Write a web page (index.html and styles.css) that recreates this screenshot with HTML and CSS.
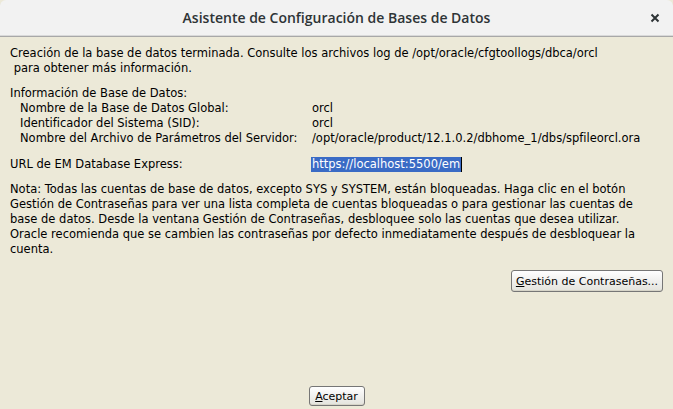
FILE: index.html
```html
<!DOCTYPE html>
<html lang="es">
<head>
<meta charset="utf-8">
<title>Asistente de Configuración de Bases de Datos</title>
<link rel="stylesheet" href="styles.css">
</head>
<body>
<div class="window">
  <header class="titlebar">
    <span class="title">Asistente de Configuración de Bases de Datos</span>
    <span class="close">
      <svg width="10" height="10" viewBox="0 0 10 10"><path d="M1.5 1.5 L8.5 8.5 M8.5 1.5 L1.5 8.5" stroke="#2e3436" stroke-width="2" stroke-linecap="butt"/></svg>
    </span>
  </header>
  <main class="content">
    <p class="line">Creación de la base de datos terminada. Consulte los archivos log de /opt/oracle/cfgtoollogs/dbca/orcl</p>
    <p class="line"> para obtener más información.</p>
    <div class="info">
      <p class="line">Información de Base de Datos:</p>
      <div class="grid">
        <span class="k">Nombre de la Base de Datos Global:</span><span class="v">orcl</span>
        <span class="k">Identificador del Sistema (SID):</span><span class="v">orcl</span>
        <span class="k">Nombre del Archivo de Parámetros del Servidor:</span><span class="v">/opt/oracle/product/12.1.0.2/dbhome_1/dbs/spfileorcl.ora</span>
      </div>
    </div>
    <div class="url">
      <span class="urlk">URL de EM Database Express:</span>
      <span class="sel">https://localhost:5500/em</span><span class="caret"></span>
    </div>
    <div class="note">
      <p class="line">Nota: Todas las cuentas de base de datos, excepto SYS y SYSTEM, están bloqueadas. Haga clic en el botón</p>
      <p class="line">Gestión de Contraseñas para ver una lista completa de cuentas bloqueadas o para gestionar las cuentas de</p>
      <p class="line">base de datos. Desde la ventana Gestión de Contraseñas, desbloquee solo las cuentas que desea utilizar.</p>
      <p class="line">Oracle recomienda que se cambien las contraseñas por defecto inmediatamente después de desbloquear la</p>
      <p class="line">cuenta.</p>
    </div>
    <div class="btnrow">
      <button class="btn btn-pw"><u>G</u>estión de Contraseñas...</button>
    </div>
  </main>
  <footer class="footer">
    <button class="btn btn-ok"><u>A</u>ceptar</button>
  </footer>
</div>
</body>
</html>
```
FILE: styles.css
```css
* { box-sizing: border-box; }
html, body { margin: 0; padding: 0; }
body {
  width: 673px;
  height: 409px;
  overflow: hidden;
  background: #ece9d8;
  font-family: "DejaVu Sans", sans-serif;
  font-size: 11.5px;
  color: #000;
}
.window {
  width: 673px;
  height: 409px;
  display: flex;
  flex-direction: column;
}
.titlebar {
  height: 37px;
  flex: none;
  background: #f2f2f2;
  border-bottom: 1px solid #a8a8a8;
  border-top-left-radius: 6px;
  border-top-right-radius: 6px;
  box-shadow: inset 0 -1px 0 #d9d9d9;
  display: flex;
  align-items: center;
  justify-content: center;
  position: relative;
}
.title {
  font-family: "Open Sans", sans-serif;
  font-weight: 600;
  font-size: 14px;
  color: #2e3436;
  margin-top: -1px;
}
.close {
  position: absolute;
  right: 13px;
  top: 13px;
  width: 10px;
  height: 10px;
  display: flex;
}
.content {
  flex: 1;
  padding: 9px 10px 0 10px;
  display: flex;
  flex-direction: column;
}
.line {
  margin: 0;
  height: 15px;
  line-height: 15px;
  white-space: pre;
}
.info { margin-top: 10px; }
.grid {
  display: grid;
  grid-template-columns: 292px auto;
  padding-left: 10px;
}
.grid span { height: 15px; line-height: 15px; white-space: pre; }
.url {
  margin-top: 10px;
  height: 16px;
  display: flex;
  align-items: center;
}
.urlk { width: 301px; white-space: pre; }
.sel {
  background: #3a6bc5;
  color: #fff;
  line-height: 15px;
  padding: 0 1px;
  white-space: pre;
}
.caret {
  width: 1px;
  height: 15px;
  background: #000;
}
.note { margin-top: 10px; }
.btnrow {
  display: flex;
  justify-content: flex-end;
  margin-top: 13px;
}
.btn {
  font-family: "DejaVu Sans", sans-serif;
  font-size: 11px;
  color: #000;
  height: 22px;
  padding: 0;
  white-space: nowrap;
  border: 1px solid #767676;
  border-radius: 3px;
  background: linear-gradient(#ffffff, #f0f0ee 50%, #e3e3dc);
  box-shadow: inset 0 -1px 0 #d6d4c8;
}
.btn-pw { width: 152px; }
.footer {
  flex: none;
  height: 23px;
  display: flex;
  justify-content: center;
  align-items: flex-start;
}
.btn-ok { width: 56px; height: 20px; }
```
